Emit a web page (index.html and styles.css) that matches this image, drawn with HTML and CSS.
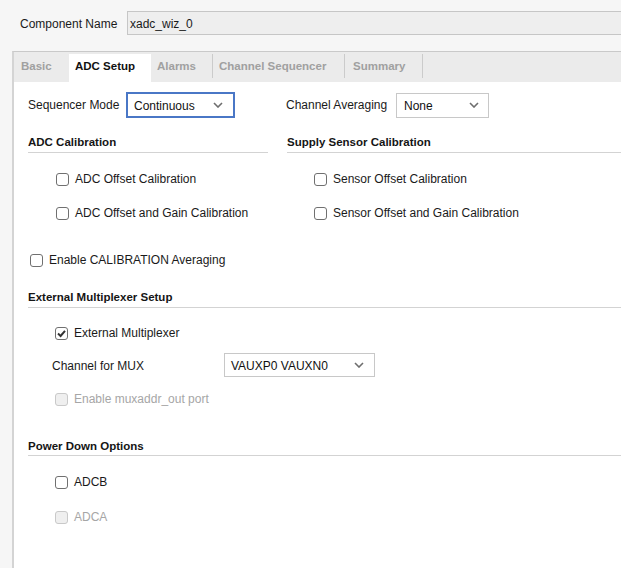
FILE: index.html
```html
<!DOCTYPE html>
<html>
<head>
<meta charset="utf-8">
<link rel="stylesheet" href="styles.css">
</head>
<body>
<div class="top">
  <span class="top-label">Component Name</span>
  <div class="name-input">xadc_wiz_0</div>
</div>
<div class="panel">
  <div class="tabs">
    <div class="tab tab-first">Basic</div>
    <div class="tab active">ADC Setup</div>
    <div class="tab sep">Alarms</div>
    <div class="tab sep">Channel Sequencer</div>
    <div class="tab sep tab-last">Summary</div>
  </div>
  <div class="content">
    <div class="grid row1">
      <div class="field">
        <span class="lbl-seq">Sequencer Mode</span>
        <div class="select focused select-seq">
          <span>Continuous</span>
          <svg class="chev" viewBox="0 0 10 6" width="10" height="6"><path d="M1 1 L5 5 L9 1" /></svg>
        </div>
      </div>
      <div class="field field-right">
        <span class="lbl-avg">Channel Averaging</span>
        <div class="select select-avg">
          <span>None</span>
          <svg class="chev" viewBox="0 0 10 6" width="10" height="6"><path d="M1 1 L5 5 L9 1" /></svg>
        </div>
      </div>
    </div>

    <div class="grid cal">
      <div class="col">
        <div class="heading">ADC Calibration</div>
        <div class="checks">
          <label class="cb"><span class="box"></span>ADC Offset Calibration</label>
          <label class="cb"><span class="box"></span>ADC Offset and Gain Calibration</label>
        </div>
      </div>
      <div class="col">
        <div class="heading">Supply Sensor Calibration</div>
        <div class="checks checks-right">
          <label class="cb"><span class="box"></span>Sensor Offset Calibration</label>
          <label class="cb"><span class="box"></span>Sensor Offset and Gain Calibration</label>
        </div>
      </div>
    </div>

    <label class="cb cb-avg"><span class="box"></span>Enable CALIBRATION Averaging</label>

    <div class="heading heading-mux">External Multiplexer Setup</div>
    <div class="section">
      <label class="cb cb-ext"><span class="box checked"><svg viewBox="0 0 11 11" width="11" height="11"><path d="M2 5.5 L4.6 8 L9 2.8" /></svg></span>External Multiplexer</label>
      <div class="mux-row">
        <span class="mux-label">Channel for MUX</span>
        <div class="select select-mux">
          <span>VAUXP0 VAUXN0</span>
          <svg class="chev" viewBox="0 0 10 6" width="10" height="6"><path d="M1 1 L5 5 L9 1" /></svg>
        </div>
      </div>
      <label class="cb disabled cb-muxaddr"><span class="box"></span>Enable muxaddr_out port</label>
    </div>

    <div class="heading heading-power">Power Down Options</div>
    <div class="section">
      <label class="cb cb-adcb"><span class="box"></span>ADCB</label>
      <label class="cb disabled cb-adca"><span class="box"></span>ADCA</label>
    </div>
  </div>
</div>
</body>
</html>
```
FILE: styles.css
```css
html, body {
  margin: 0;
  padding: 0;
}
body {
  width: 621px;
  height: 568px;
  overflow: hidden;
  background: #f6f6f6;
  font-family: "Liberation Sans", Arial, sans-serif;
  font-size: 12px;
  color: #1a1a1a;
  display: flex;
  flex-direction: column;
}
.top {
  display: flex;
  align-items: center;
  padding: 11px 0 0 20px;
}
.top-label {
  width: 107px;
  padding-top: 2px;
}
.name-input {
  flex: 1;
  height: 22px;
  line-height: 25px;
  background: #eeeeee;
  border: 1px solid #c6c6c6;
  border-right: none;
  padding-left: 2px;
}
.panel {
  flex: 1;
  margin: 16px 0 0 12px;
  border-left: 2px solid #d4d4d4;
  border-top: 1px solid #c9c9c9;
  background: #ffffff;
  display: flex;
  flex-direction: column;
}
.tabs {
  display: flex;
  align-items: flex-start;
  background: #ebebeb;
  height: 28px;
  padding-top: 2px;
}
.tab {
  height: 24px;
  line-height: 22px;
  padding: 1px 0 0 6px;
  box-sizing: border-box;
  font-weight: bold;
  font-size: 11.5px;
  color: #a0a0a0;
  white-space: nowrap;
  flex: none;
}
.tab-first {
  width: 55px;
  padding-left: 7px;
}
.tab.active {
  height: 28px;
  width: 82px;
  background: #ffffff;
  color: #111111;
}
.tab.sep {
  border-right: 1px solid #cbcbcb;
}
.tab:nth-child(3) {
  width: 62px;
}
.tab:nth-child(4) {
  width: 132px;
}
.tab-last {
  padding-left: 8px;
  width: 78px;
}
.content {
  padding: 10px 0 0 14px;
}
.grid {
  display: grid;
  grid-template-columns: 240px 1fr;
  column-gap: 19px;
}
.row1 {
  height: 26px;
}
.field {
  display: flex;
  align-items: center;
}
.field-right {
  margin-left: -1px;
}
.lbl-seq {
  width: 98px;
  flex: none;
}
.lbl-avg {
  width: 110px;
  flex: none;
}
.select {
  display: flex;
  align-items: center;
  justify-content: space-between;
  box-sizing: border-box;
  border: 1px solid #c8c8c8;
  background: #ffffff;
  color: #111111;
  flex: none;
}
.select span {
  padding-top: 1px;
}
.chev path {
  fill: none;
  stroke: #6e6e6e;
  stroke-width: 1.6;
}
.select-seq {
  width: 109px;
  height: 26px;
  border: 2px solid #4a77c6;
  padding: 0 10px 0 6px;
}
.select-avg {
  width: 93px;
  height: 25px;
  padding: 0 9px 0 7px;
}
.cal {
  margin-top: 17px;
}
.heading {
  font-weight: bold;
  font-size: 11.5px;
  line-height: 14px;
  padding-bottom: 3px;
  border-bottom: 1px solid #d3d3d3;
  color: #151515;
}
.checks {
  padding: 15px 0 0 28px;
  display: flex;
  flex-direction: column;
  gap: 14px;
}
.checks-right {
  padding-left: 27px;
}
.cb {
  display: flex;
  align-items: center;
  height: 20px;
  padding-top: 2px;
  box-sizing: border-box;
  white-space: nowrap;
}
.box {
  width: 13px;
  height: 13px;
  box-sizing: border-box;
  border: 1px solid #707070;
  border-radius: 3px;
  background: #ffffff;
  margin-right: 6px;
  display: flex;
  align-items: center;
  justify-content: center;
  flex: none;
}
.box.checked path {
  fill: none;
  stroke: #333333;
  stroke-width: 2;
}
.cb.disabled {
  color: #a6a6a6;
}
.cb.disabled .box {
  border-color: #c9c9c9;
  background: #efefef;
}
.cb-avg {
  margin: 27px 0 0 2px;
}
.heading-mux {
  margin-top: 21px;
}
.section {
  padding-left: 27px;
}
.cb-ext {
  margin-top: 14px;
}
.mux-row {
  display: flex;
  align-items: center;
  margin: 11px 0 0 -3px;
}
.mux-label {
  width: 172px;
  padding-top: 1px;
}
.select-mux {
  width: 151px;
  height: 24px;
  padding: 0 10px 0 6px;
}
.cb-muxaddr {
  margin-top: 11px;
}
.heading-power {
  margin-top: 31px;
  padding-bottom: 2px;
}
.cb-adcb {
  margin-top: 15px;
}
.cb-adca {
  margin-top: 15px;
}
```
